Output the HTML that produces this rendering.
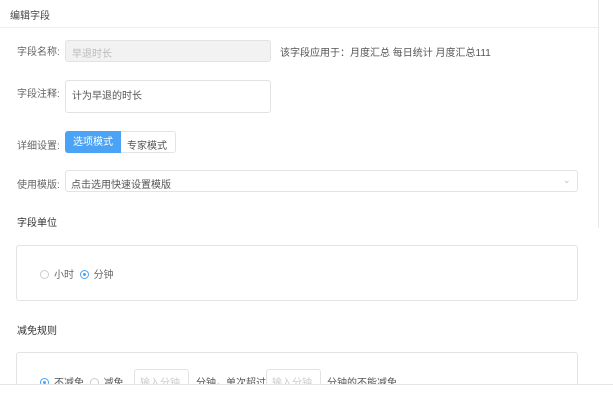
<!DOCTYPE html><html><head><meta charset="utf-8"><style>
*{margin:0;padding:0;box-sizing:border-box}
html{overflow:hidden;width:613px;height:404px}
body{width:613px;height:404px;background:#fff;font-family:"Liberation Sans","Noto Sans CJK SC",sans-serif;font-size:10px;color:#666;position:relative;overflow:hidden}
.a{position:absolute;white-space:nowrap}
.box{position:absolute;border:1px solid #e3e3e3;border-radius:3px;background:#fff}
.r{display:inline-block;width:9px;height:9px;border:1px solid #ccc;border-radius:50%;vertical-align:-1px;margin-right:5px;position:relative}
.r.on{border-color:#4aa3f5}
.r.on:after{content:"";position:absolute;left:2px;top:2px;width:3px;height:3px;border-radius:50%;background:#4aa3f5}
</style></head><body>
<div class="a" style="left:10px;top:7px;color:#444">编辑字段</div>
<div class="a" style="left:0;top:27px;width:598px;height:1px;background:#eee"></div>
<div class="a" style="left:598px;top:0;width:1px;height:228px;background:#e8e8e8"></div>

<div class="a" style="left:17px;top:43px">字段名称:</div>
<div class="box" style="left:65px;top:40px;width:206px;height:22px;background:#f2f2f2"></div>
<div class="a" style="left:72px;top:45px;color:#bbb">早退时长</div>
<div class="a" style="left:280px;top:44px;color:#555">该字段应用于：月度汇总 每日统计 月度汇总111</div>

<div class="a" style="left:17px;top:85px">字段注释:</div>
<div class="box" style="left:65px;top:80px;width:206px;height:33px"></div>
<div class="a" style="left:72px;top:87px;color:#555">计为早退的时长</div>

<div class="a" style="left:17px;top:137px">详细设置:</div>
<div class="box" style="left:65px;top:131px;width:111px;height:22px"></div>
<div class="a" style="left:65px;top:131px;width:56px;height:22px;background:#4aa3f5;border-radius:3px 0 0 3px;color:#fff;text-align:center;line-height:23px">选项模式</div>
<div class="a" style="left:127px;top:137px;color:#555">专家模式</div>

<div class="a" style="left:17px;top:176px">使用模版:</div>
<div class="box" style="left:65px;top:170px;width:513px;height:22px"></div>
<div class="a" style="left:71px;top:176px;color:#555">点击选用快速设置模版</div>
<div class="a" style="left:563px;top:175px;color:#bbb;font-size:9px">⌄</div>

<div class="a" style="left:17px;top:214px;color:#333">字段单位</div>
<div class="box" style="left:16px;top:245px;width:562px;height:56px"></div>
<div class="a" style="left:40px;top:266px"><span class="r"></span>小时 &nbsp;<span class="r on"></span>分钟</div>

<div class="a" style="left:17px;top:322px;color:#333">减免规则</div>
<div class="box" style="left:16px;top:352px;width:562px;height:40px"></div>
<div class="a" style="left:40px;top:374px;color:#555"><span class="r on"></span>不减免 &nbsp;<span class="r"></span>减免</div>
<div class="box" style="left:134px;top:369px;width:55px;height:22px"></div>
<div class="a" style="left:140px;top:374px;color:#ccc">输入分钟</div>
<div class="a" style="left:196px;top:374px;color:#555">分钟，单次超过</div>
<div class="box" style="left:266px;top:369px;width:55px;height:22px"></div>
<div class="a" style="left:272px;top:374px;color:#ccc">输入分钟</div>
<div class="a" style="left:327px;top:374px;color:#555">分钟的不能减免</div>
<div class="a" style="left:0;top:384px;width:613px;height:20px;background:#fff;border-top:1px solid #e6e6e6"></div>
</body></html>
